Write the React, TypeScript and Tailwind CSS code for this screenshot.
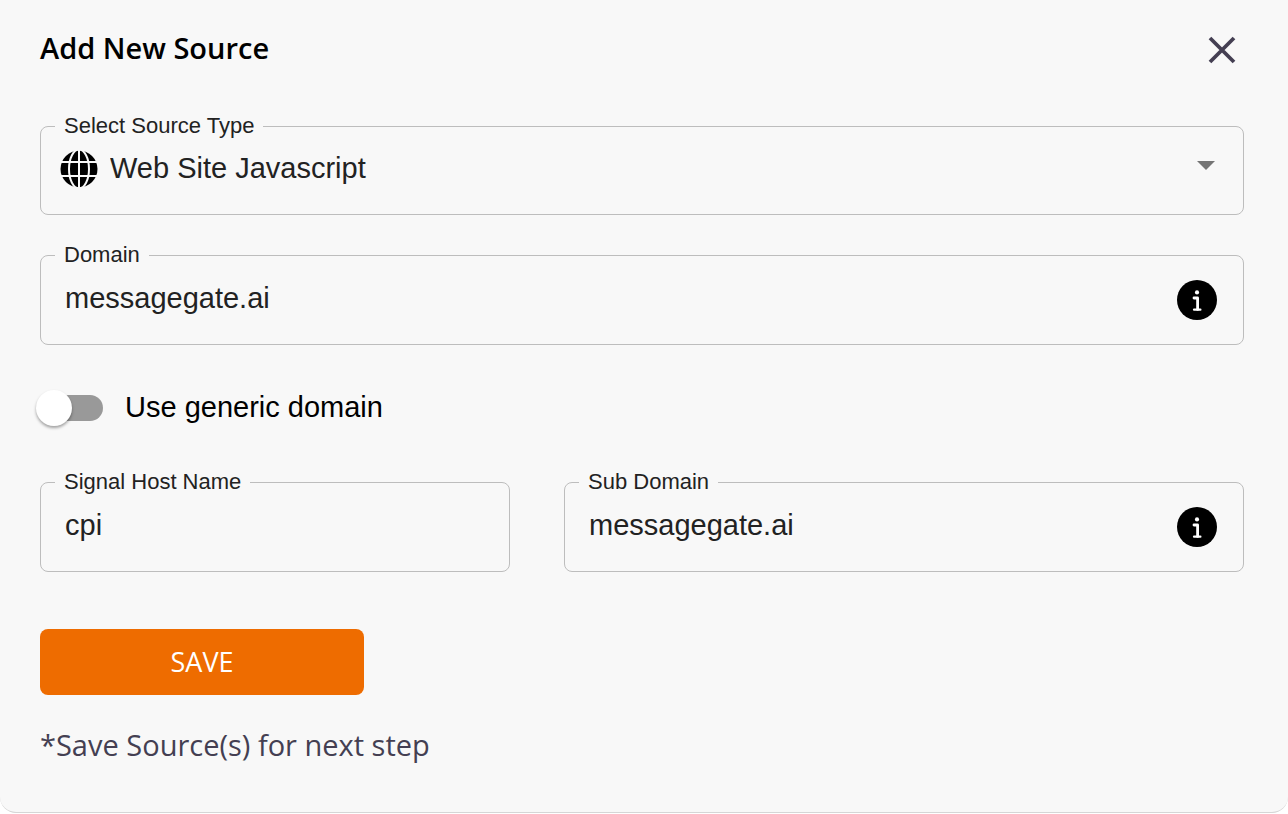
import React, { useState } from 'react';

const GlobeIcon: React.FC = () => (
  <svg viewBox="0 0 38 38" className="h-[38px] w-[38px] shrink-0" aria-hidden="true">
    <circle cx="19" cy="19" r="18.5" fill="#000" />
    <g fill="none" stroke="#f8f8f8" strokeWidth="2">
      <path d="M19 0v38M0 12h38M0 26h38" />
      <ellipse cx="19" cy="19" rx="10" ry="19.5" />
    </g>
  </svg>
);

const InfoIcon: React.FC = () => (
  <svg viewBox="0 0 40 40" className="h-10 w-10" aria-hidden="true">
    <circle cx="20" cy="20" r="20" fill="#000" />
    <circle cx="20" cy="12.4" r="2.1" fill="#fff" />
    <path d="M17 18h3.6v11.4" fill="none" stroke="#fff" strokeWidth="2.8" strokeLinecap="round" strokeLinejoin="round" />
    <path d="M17 29.7h6.4" fill="none" stroke="#fff" strokeWidth="2.2" strokeLinecap="round" />
  </svg>
);

interface FieldProps {
  id: string;
  label: string;
  children: React.ReactNode;
}

const Field: React.FC<FieldProps> = ({ id, label, children }) => (
  <fieldset className="min-w-0 rounded-lg border border-[#bdbdbd]">
    <legend className="ml-3.5 px-[9px] text-[22px] leading-[26px] text-[#222]">
      <label htmlFor={id}>{label}</label>
    </legend>
    {children}
  </fieldset>
);

interface TextFieldProps {
  id: string;
  label: string;
  initial: string;
  info?: boolean;
}

const TextField: React.FC<TextFieldProps> = ({ id, label, initial, info }) => {
  const [value, setValue] = useState(initial);

  return (
    <Field id={id} label={label}>
      <div className="flex items-start pr-[26px] pl-6">
        <input
          id={id}
          type="text"
          value={value}
          onChange={(e) => setValue(e.target.value)}
          className="mb-4 h-[60px] min-w-0 flex-1 bg-transparent text-[29px] text-[#222] outline-none"
        />
        {info && (
          <button type="button" aria-label={`About ${label}`} className="mt-3 rounded-full">
            <InfoIcon />
          </button>
        )}
      </div>
    </Field>
  );
};

const App: React.FC = () => {
  const [generic, setGeneric] = useState(false);

  return (
    <main className="bg-white font-['Liberation_Sans',Arial,sans-serif]">
      <form
        onSubmit={(e) => e.preventDefault()}
        className="rounded-b-2xl border-b border-[#d6d6d6] bg-[#f8f8f8] pt-7 pr-11 pb-[49px] pl-10"
      >
        <div className="flex h-10 items-center justify-between pr-2">
          <h1 className="font-['Open_Sans',sans-serif] text-[29px] font-semibold text-black">
            Add New Source
          </h1>
          <button type="button" aria-label="Close" className="mt-1">
            <svg viewBox="0 0 28 28" className="h-7 w-7" aria-hidden="true">
              <path d="M2 2l24 24M26 2L2 26" fill="none" stroke="#443f52" strokeWidth="3.8" />
            </svg>
          </button>
        </div>

        <div className="mt-[45px]">
          <Field id="source-type" label="Select Source Type">
            <div className="mb-[15px] flex h-[60px] items-center pr-6 pl-[19px]">
              <GlobeIcon />
              <div className="relative ml-3 flex-1">
                <select
                  id="source-type"
                  className="h-[60px] w-full appearance-none bg-transparent text-[29px] text-[#222] outline-none"
                >
                  <option>Web Site Javascript</option>
                </select>
                <svg
                  viewBox="0 0 18 9"
                  className="pointer-events-none absolute top-[22px] right-1 h-[9px] w-[18px]"
                  aria-hidden="true"
                >
                  <path d="M0 0h18l-9 9z" fill="#757575" />
                </svg>
              </div>
            </div>
          </Field>
        </div>

        <div className="mt-[27px]">
          <TextField id="domain" label="Domain" initial="messagegate.ai" info />
        </div>

        <label className="mt-11 flex h-[38px] w-fit items-center text-[29px] text-black">
          <span className="relative flex h-9 w-[63px] items-center">
            <input
              type="checkbox"
              role="switch"
              checked={generic}
              onChange={(e) => setGeneric(e.target.checked)}
              className="peer sr-only"
            />
            <span className="h-[26px] w-full rounded-full bg-[#999] peer-checked:bg-[#f4b580]" />
            <span className="absolute top-0 -left-1 h-9 w-9 rounded-full bg-white shadow-[0_2px_3px_rgba(0,0,0,0.35)] transition-transform peer-checked:translate-x-8" />
          </span>
          <span className="ml-[22px]">Use generic domain</span>
        </label>

        <div className="mt-[42px] grid grid-cols-[47fr_68fr] gap-[54px]">
          <TextField id="host-name" label="Signal Host Name" initial="cpi" />
          <TextField id="sub-domain" label="Sub Domain" initial="messagegate.ai" info />
        </div>

        <button
          type="submit"
          className="mt-[57px] block h-[66px] w-[324px] rounded-lg bg-[#ee6c00] font-['Open_Sans',sans-serif] text-[27px] text-white"
        >
          SAVE
        </button>

        <p className="mt-8 font-['Open_Sans',sans-serif] text-[29px] leading-9 text-[#443f52]">
          *Save Source(s) for next step
        </p>
      </form>
    </main>
  );
};

export default App;
